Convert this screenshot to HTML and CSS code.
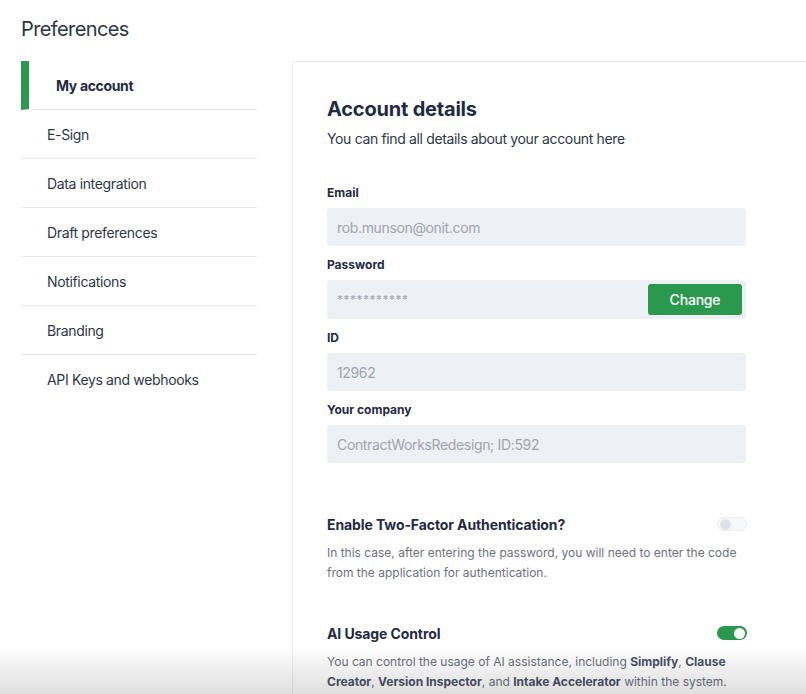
FILE: index.html
```html
<!DOCTYPE html>
<html>
<head>
<meta charset="utf-8">
<link rel="stylesheet" href="styles.css">
</head>
<body>
<div class="page">
  <h1 class="title">Preferences</h1>
  <div class="layout">
    <nav class="sidebar">
      <a class="nav-item active">My account</a>
      <a class="nav-item">E-Sign</a>
      <a class="nav-item">Data integration</a>
      <a class="nav-item">Draft preferences</a>
      <a class="nav-item">Notifications</a>
      <a class="nav-item">Branding</a>
      <a class="nav-item last">API Keys and webhooks</a>
    </nav>
    <main class="panel">
      <div class="content">
        <h2 class="heading">Account details</h2>
        <p class="subtitle">You can find all details about your account here</p>

        <div class="field">
          <div class="label">Email</div>
          <div class="input">rob.munson@onit.com</div>
        </div>
        <div class="field">
          <div class="label">Password</div>
          <div class="input with-btn"><span class="dots">***********</span><button class="btn">Change</button></div>
        </div>
        <div class="field">
          <div class="label">ID</div>
          <div class="input">12962</div>
        </div>
        <div class="field">
          <div class="label">Your company</div>
          <div class="input">ContractWorksRedesign; ID:592</div>
        </div>

        <div class="setting first">
          <div class="setting-head">
            <span class="setting-title">Enable Two-Factor Authentication?</span>
            <span class="toggle off"><span class="knob"></span></span>
          </div>
          <p class="setting-desc">In this case, after entering the password, you will need to enter the code from the application for authentication.</p>
        </div>
        <div class="setting">
          <div class="setting-head">
            <span class="setting-title">AI Usage Control</span>
            <span class="toggle on"><span class="knob"></span></span>
          </div>
          <p class="setting-desc">You can control the usage of AI assistance, including <b>Simplify</b>, <b>Clause Creator</b>, <b>Version Inspector</b>, and <b>Intake Accelerator</b> within the system.</p>
        </div>
      </div>
    </main>
  </div>
</div>
<div class="shade"></div>
</body>
</html>
```

FILE: styles.css
```css
html, body {
  margin: 0;
  padding: 0;
  background: #ffffff;
  overflow: hidden;
  height: 694px;
}
body {
  font-family: Inter, "Noto Sans", "Liberation Sans", sans-serif;
  color: #2d3748;
}
.page {
  padding-left: 21px;
}
.title {
  margin: 0;
  padding-top: 16px;
  height: 61px;
  box-sizing: border-box;
  font-size: 20px;
  line-height: 26px;
  font-weight: 400;
  color: #2a3547;
  letter-spacing: -0.6px;
}
.layout {
  display: flex;
  gap: 35px;
  align-items: flex-start;
}
.sidebar {
  width: 236px;
  flex: none;
  display: flex;
  flex-direction: column;
}
.nav-item {
  display: flex;
  align-items: center;
  height: 48px;
  border-bottom: 1px solid #e6e8ec;
  padding-left: 26px;
  font-size: 14px;
  letter-spacing: -0.35px;
  color: #2d3748;
}
.nav-item.last {
  border-bottom: none;
}
.nav-item.active {
  border-left: 8px solid #2b9a4f;
  padding-left: 27px;
  font-weight: 700;
  color: #1f2b44;
}
.panel {
  flex: none;
  width: 514px;
  height: 633px;
  overflow: hidden;
  border-left: 1px solid #eceef1;
  border-top: 1px solid #eceef1;
  box-sizing: border-box;
  padding: 33px 0 0 34px;
}
.content {
  width: 419px;
}
.heading {
  margin: 0;
  font-size: 20px;
  line-height: 28px;
  font-weight: 700;
  color: #1f2b44;
  letter-spacing: -0.2px;
}
.subtitle {
  margin: 6px 0 0;
  font-size: 14px;
  line-height: 20px;
  letter-spacing: -0.35px;
  color: #2d3748;
}
.subtitle + .field {
  margin-top: 36px;
}
.field + .field {
  margin-top: 11px;
}
.label {
  font-size: 12px;
  line-height: 16px;
  font-weight: 700;
  color: #1f2b44;
  margin-bottom: 7px;
}
.input {
  height: 38px;
  box-sizing: border-box;
  background: #edf0f5;
  border-radius: 3px;
  padding: 0 10px;
  display: flex;
  align-items: center;
  font-size: 14px;
  letter-spacing: -0.35px;
  color: #a0a5ae;
}
.input.with-btn {
  justify-content: space-between;
  padding-right: 4px;
  height: 39px;
}
.dots {
  font-size: 12px;
  letter-spacing: 0.5px;
  color: #a0a5ae;
}
.btn {
  width: 94px;
  height: 31px;
  background: #2a994e;
  border: none;
  border-radius: 3px;
  color: #ffffff;
  font-family: inherit;
  font-size: 14px;
  font-weight: 500;
  letter-spacing: -0.2px;
}
.setting.first {
  margin-top: 51px;
}
.setting + .setting {
  margin-top: 40px;
}
.setting-head {
  display: flex;
  justify-content: space-between;
  align-items: center;
  height: 20px;
}
.setting-title {
  font-size: 14px;
  font-weight: 700;
  letter-spacing: -0.1px;
  color: #1f2b44;
}
.setting-desc {
  margin: 9px 0 0;
  font-size: 12px;
  line-height: 20px;
  color: #6b7280;
}
.setting-desc b {
  font-weight: 700;
  color: #4a5468;
}
.toggle {
  width: 30px;
  height: 14px;
  border-radius: 8px;
  box-sizing: border-box;
  display: flex;
  align-items: center;
  padding: 0 2px;
  margin-right: -1px;
}
.toggle .knob {
  width: 11px;
  height: 11px;
  border-radius: 50%;
}
.toggle.off {
  background: #f7f8fa;
  border: 1px solid #eceef1;
}
.toggle.off .knob {
  background: #e2e2ec;
}
.toggle.on {
  background: #2a994e;
  justify-content: flex-end;
}
.toggle.on .knob {
  background: #ffffff;
}
.shade {
  position: fixed;
  left: 0;
  right: 0;
  bottom: 0;
  height: 48px;
  background: linear-gradient(to bottom, rgba(0,0,0,0), rgba(0,0,0,0.13));
  pointer-events: none;
}
```
